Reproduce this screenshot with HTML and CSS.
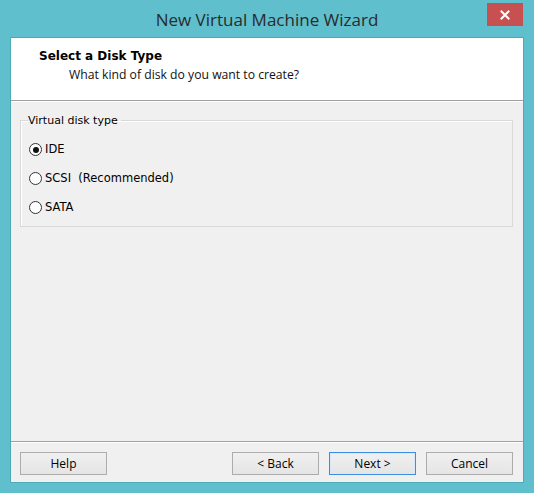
FILE: index.html
```html
<!DOCTYPE html>
<html>
<head>
<meta charset="utf-8">
<link rel="stylesheet" href="styles.css">
</head>
<body>
<div class="window">
  <div class="titlebar">
    <span class="spacer"></span>
    <span class="title">New Virtual Machine Wizard</span>
    <span class="close-wrap"><span class="close"><svg width="10" height="10" viewBox="0 0 10 10"><path d="M1.5 1.5 L8.5 8.5 M8.5 1.5 L1.5 8.5" stroke="#fff" stroke-width="2" stroke-linecap="square"/></svg></span></span>
  </div>
  <div class="client">
    <div class="header">
      <div class="h-title">Select a Disk Type</div>
      <div class="h-sub">What kind of disk do you want to create?</div>
    </div>
    <div class="body">
      <fieldset class="group">
        <legend>Virtual disk type</legend>
        <div class="opt"><span class="radio checked"></span><span>IDE</span></div>
        <div class="opt"><span class="radio"></span><span>SCSI&nbsp; (Recommended)</span></div>
        <div class="opt"><span class="radio"></span><span>SATA</span></div>
      </fieldset>
    </div>
    <div class="footer">
      <button class="btn">Help</button>
      <span class="grow"></span>
      <button class="btn">&lt; Back</button>
      <button class="btn default">Next &gt;</button>
      <button class="btn">Cancel</button>
    </div>
  </div>
</div>
</body>
</html>
```
FILE: styles.css
```css
html, body {
  margin: 0;
  padding: 0;
  background: #5fbfcd;
}
.window {
  width: 534px;
  height: 493px;
  box-sizing: border-box;
  background: #5fbfcd;
  padding: 0 11px 11px 11px;
  display: flex;
  flex-direction: column;
}
.titlebar {
  height: 38px;
  display: grid;
  grid-template-columns: 1fr auto 1fr;
  align-items: start;
}
.title {
  font-family: "Open Sans", "Noto Sans", sans-serif;
  font-size: 17px;
  color: #2b2b2b;
  line-height: 22px;
  padding-top: 9px;
  white-space: nowrap;
}
.close-wrap {
  display: flex;
  justify-content: flex-end;
  padding-top: 3px;
}
.close {
  width: 36px;
  height: 23px;
  background: #c75050;
  display: flex;
  align-items: center;
  justify-content: center;
}
.client {
  flex: 1;
  display: flex;
  flex-direction: column;
  background: #f0f0f0;
  box-shadow: 0 0 0 1px #4eaab8;
  font-family: "DejaVu Sans", sans-serif;
  font-size: 11px;
  color: #000;
}
.header {
  height: 63px;
  box-sizing: border-box;
  background: #fff;
  border-bottom: 1px solid #a0a0a0;
  padding: 11px 0 0 28px;
}
.h-title {
  font-weight: bold;
  font-size: 12px;
  line-height: 14px;
}
.h-sub {
  font-family: "Open Sans", "Noto Sans", sans-serif;
  font-size: 12.2px;
  line-height: 16px;
  margin-top: 4px;
  padding-left: 30px;
  color: #111;
}
.body {
  flex: 1;
  border-top: 1px solid #fff;
  padding: 12px 10px 0 9px;
}
.group {
  margin: 0;
  border: 1px solid #d9d9d9;
  box-shadow: inset 1px 1px 0 #fff;
  padding: 16px 0 12px 8px;
  height: 113px;
  box-sizing: border-box;
  display: flex;
  flex-direction: column;
  gap: 16px;
}
.group legend {
  padding: 0 3px 0 0;
  margin-left: -1px;
  line-height: 13px;
  color: #000;
}
.opt {
  display: flex;
  align-items: center;
  gap: 3px;
  height: 13px;
  line-height: 13px;
  font-size: 11.5px;
}
.radio {
  width: 11px;
  height: 11px;
  border: 1px solid #333;
  border-radius: 50%;
  background: #fff;
  display: flex;
  align-items: center;
  justify-content: center;
}
.radio.checked::after {
  content: "";
  width: 6px;
  height: 6px;
  border-radius: 50%;
  background: #111;
}
.footer {
  height: 41px;
  box-sizing: border-box;
  border-top: 1px solid #a0a0a0;
  box-shadow: inset 0 1px 0 #fff;
  display: flex;
  align-items: flex-start;
  padding: 10px 10px 0 9px;
  gap: 10px;
}
.grow {
  flex: 1;
}
.btn {
  width: 87px;
  height: 23px;
  margin: 0;
  padding: 0;
  border: 1px solid #acacac;
  background: linear-gradient(#f0f0f0, #e5e5e5);
  font-family: "Open Sans", "Noto Sans", sans-serif;
  font-size: 12px;
  color: #000;
  border-radius: 0;
}
.btn.default {
  border-color: #3c8ee0;
  box-shadow: inset 0 0 0 1px #d8e8f8;
}
```
